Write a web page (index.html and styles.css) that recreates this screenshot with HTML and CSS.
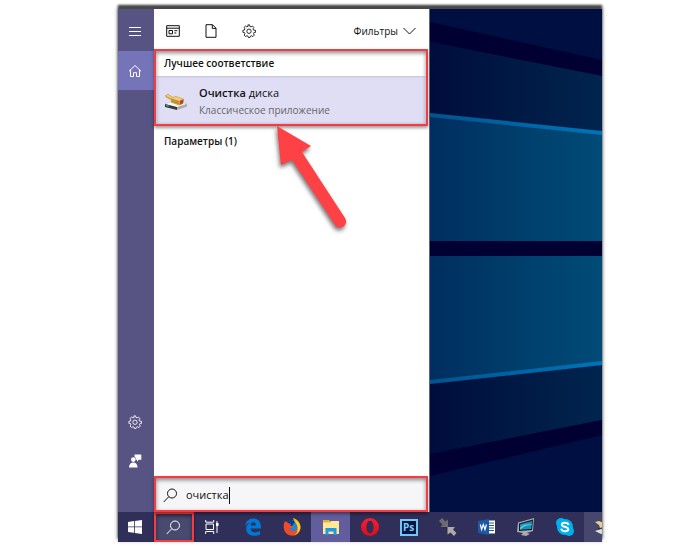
FILE: index.html
```html
<!DOCTYPE html>
<html lang="ru">
<head>
<meta charset="utf-8">
<title>Поиск</title>
<link rel="stylesheet" href="styles.css">
</head>
<body>
<div class="screen">
  <main class="desktop">
    <nav class="rail" aria-label="Меню">
      <button class="rail-item" aria-label="Меню"><svg width="14" height="12" viewBox="0 0 14 12"><path class="line" d="M1 1.5h12M1 5.5h12M1 9.5h12"/></svg></button>
      <button class="rail-item current" aria-label="Домой"><svg width="14" height="14" viewBox="0 0 14 14"><path class="line" d="M1 7.2 7 1.5l6 5.7M2.5 6v6.5h3V8.7h3v3.8h3V6"/></svg></button>
      <div class="rail-space"></div>
      <button class="rail-item" aria-label="Настройки"><svg width="14" height="14" viewBox="0 0 16 16"><use href="#gear"/></svg></button>
      <button class="rail-item" aria-label="Отзывы"><svg width="14" height="14" viewBox="0 0 14 14"><g fill="#fff"><path d="M6.5.5h6.8v5.3h-2.5L9 7.500V5.800H7.800A3 3 0 0 0 6.500 2.500z"/><circle cx="5.3" cy="5.6" r="2.3"/><path d="M1 13.500c0-3 1.500-5 4.300-5s4.200 2 4.200 5z"/></g></svg></button>
    </nav>
    <section class="panel">
      <header class="tools">
        <button class="tool" aria-label="Приложения"><svg width="14" height="12" viewBox="0 0 14 12"><path class="line" d="M.7.7h12.6v10.6H.7zM.7 3.200h12.600M3 5.500h3.500v3.300H3zM8.300 5.700h3M8.300 8h2"/></svg></button>
        <button class="tool" aria-label="Документы"><svg width="12" height="14" viewBox="0 0 12 14"><path class="line" d="M1 .7h6.500L11 4.200v9.100H1zM7.300.7v3.700H11"/></svg></button>
        <button class="tool" aria-label="Параметры"><svg width="14" height="14" viewBox="0 0 16 16"><use href="#gear"/></svg></button>
        <button class="filters">Фильтры <svg width="13" height="8" viewBox="0 0 13 8"><path class="line" d="m.5 1 6 6 6-6"/></svg></button>
      </header>
      <section class="best marked">
        <h2 class="heading">Лучшее соответствие</h2>
        <a class="result" href="#">
          <svg width="24" height="20" viewBox="0 0 24 20">
            <path fill="#fafafa" stroke="#bbb" stroke-width=".5" d="m1 13 10-4 12 4-10 4z"/>
            <path fill="#343d3a" d="m1 13 12 3v3L1 16z"/><path fill="#aaa" d="m13 16 10-3v2.500L13 19z"/>
            <path fill="#36b879" d="m2 14 3 .8v1L2 15z"/>
            <path fill="#d4a145" d="M1 4.500 4 3l5 3 3-1 8 3-1 5-4 1.500-8-3V9L2 6.500z"/>
            <path fill="#f0cc78" d="m2 4.800 2-1 5 3 3-1 7 2.500-4 1.500-7-2z"/>
            <path fill="#a84a31" d="m16 10 3.500-1.700-.5 4-3 1.500z"/><path stroke="#a06d26" stroke-width=".6" d="m7 8 8 3M7 10l8 2.700"/>
          </svg>
          <span class="result-text"><span class="name"><b>Очистка</b> диска</span><span class="kind">Классическое приложение</span></span>
        </a>
      </section>
      <h2 class="heading group">Параметры (1)</h2>
      <div class="panel-space"></div>
      <label class="search marked">
        <svg width="15" height="15" viewBox="0 0 15 15"><use href="#lens"/></svg>
        <input type="text" value="очистка" aria-label="Поиск">
        <span class="caret"></span>
      </label>
      <svg class="arrow" width="80" height="112" viewBox="0 0 80 112" aria-hidden="true"><path d="M7 3 41 23 32 29 75 95A6 6 0 0 1 65 102L22 37 11 42z"/></svg>
    </section>
    <svg class="wallpaper" viewBox="0 0 172 503" preserveAspectRatio="none" aria-hidden="true">
      <defs>
        <linearGradient id="glass"><stop stop-color="#002e61"/><stop offset=".5" stop-color="#003e6c"/><stop offset="1" stop-color="#004b77"/></linearGradient>
        <linearGradient id="dim"><stop stop-color="#000d3c"/><stop offset="1" stop-color="#00254e"/></linearGradient>
        <linearGradient id="edge"><stop stop-color="#00548f"/><stop offset="1" stop-color="#0074b9"/></linearGradient>
      </defs>
      <path fill="#000f42" d="M0 0h172v503H0z"/>
      <path fill="#000033" d="m0 13 172 38v16L0 33z"/>
      <path fill="url(#dim)" d="m0 33 172 34v56L0 104z"/>
      <path fill="url(#glass)" d="m0 106 172 18v108H0zM0 247h172v107L0 373z"/>
      <path fill="#000033" d="M0 232h172v15H0z"/>
      <path fill="url(#dim)" d="m0 373 172-19v57L0 445z"/>
      <path fill="url(#edge)" d="m0 104 172 18v4L0 108zM0 371l172-19v4L0 375z"/>
      <path fill="#000033" d="m0 445 172-34v15L0 467z"/>
    </svg>
  </main>
  <footer class="taskbar">
    <button class="task start" aria-label="Пуск"><svg width="14" height="14" viewBox="0 0 14 14"><path fill="#fff" d="m0 2 6-.9v5.400H0zM6.800 1 14 0v6.500H6.800zM0 7.300h6v5.400L0 12zM6.800 7.300H14V14l-7.200-1z"/></svg></button>
    <button class="task find marked" aria-label="Поиск"><svg width="15" height="15" viewBox="0 0 15 15"><use href="#lens"/></svg></button>
    <button class="task view" aria-label="Представление задач"><svg width="14" height="14" viewBox="0 0 14 14"><path class="line" d="M.7 0v2.200h8V0M1 4h7.500v5.500H1zM.7 14v-2.500h8V14M12 1v12"/><path fill="#fff" d="M11 3h2.500v3H11z"/></svg></button>
    <button class="task" aria-label="Edge"><svg width="16" height="18" viewBox="0 0 16 18"><path fill="#0078d7" d="M0 8.200C.7 3.300 3.800.5 8 .5c5 0 8 3.500 8 8.300v1.700H5.500c.2 2.700 2 3.900 4.700 3.900 1.800 0 3.400-.5 4.800-1.300v3.400c-1.500.9-3.600 1.300-5.800 1.300-5 0-8-3-8-7 0-2.800 1.300-5 3.800-6.300C2.700 4.900 1 6.300 0 8.200zm5.600-.7h5.300c0-2-.9-3.300-2.600-3.300S5.700 5.600 5.600 7.500z"/></svg></button>
    <button class="task" aria-label="Firefox"><svg width="18" height="18" viewBox="0 0 18 18"><circle cx="9" cy="9" r="7" fill="#1a87da"/><path fill="#063d91" d="M4 4c3-3 7-2 8 0L9 8 5 7z"/><path fill="#f34926" d="M2 3c-2 4-2 10 2 13 5 3.500 11 1 13-4 1-4 0-7-2-9 1 6-1 10-5 10-3 0-4-2-4-3 2 1 4 0 5-1L7 8l1-2-3-1z"/><path fill="#ffb514" d="M10 0c4 1 8 5 7.500 10-.5 4-3.500 7-7 7.500 4-2 5-5 4-9-.8-3-3-4-4.500-8.500z"/><path fill="#ffde39" d="M13 3c4 3 5 8 1 12 1.500-4 1-8-1-12z"/></svg></button>
    <button class="task open" aria-label="Проводник"><svg width="18" height="16" viewBox="0 0 18 16"><path fill="#e8bd32" d="M1 1h6l1.500 2H17v12H1z"/><path fill="#ffe999" d="M1 3.500h7l1-1.500h8v13H1z"/><path fill="#ed9b20" d="M2 1.500h4v1H2z"/><path fill="#1d9be0" d="M3.500 9h11v7h-3v-3.500h-5V16h-3z"/></svg></button>
    <button class="task" aria-label="Opera"><svg width="18" height="18" viewBox="0 0 18 18"><defs><linearGradient id="red" x2="0" y2="1"><stop stop-color="#ff1b2d"/><stop offset="1" stop-color="#d80f1d"/></linearGradient></defs><path fill="url(#red)" fill-rule="evenodd" d="M9 0a9 9 0 1 0 0 18A9 9 0 0 0 9 0zm0 2.800c2.300 0 3.600 2.800 3.600 6.200S11.300 15.200 9 15.200 5.400 12.400 5.400 9 6.700 2.800 9 2.800z"/></svg></button>
    <button class="task" aria-label="Photoshop"><span class="ps">Ps</span></button>
    <button class="task" aria-label="Передача"><svg width="18" height="18" viewBox="0 0 18 18"><path fill="#6d6b70" d="m0 3 3-3 3.500 3.500L9 1.500V9H1.500l2-2.500z"/><path fill="#adaaa9" d="M8.500 9H16l-2 2.500 3.500 3.500-2.500 3-3.500-3.500-3 2z"/></svg></button>
    <button class="task" aria-label="Word"><svg width="18" height="16" viewBox="0 0 18 16"><path fill="#fff" d="M9 1.500h8v13H9z"/><path stroke="#2b579a" d="M11 4h5M11 6.500h5M11 9h5M11 11.500h5"/><path fill="#1c5aa5" d="m0 2 11-2v16L0 14z"/><path fill="none" stroke="#fff" stroke-width="1.200" d="m2.300 5.500 1.300 5 1.700-5 1.700 5 1.400-5"/></svg></button>
    <button class="task" aria-label="Монитор"><svg width="18" height="18" viewBox="0 0 18 18"><path fill="#a9abac" d="M1 4.500 17 0l-1 13-6 2 3 1-4 2-5-1 2-2-6-1z"/><path fill="#12181e" d="m2 5.500 14-4-1 10.500-13 1z"/><path fill="#1991bd" d="m3 6.300 12-3.300-.8 8L3 11.800z"/><path fill="#5cccdf" d="M3 10c4-5 7-3 11.600-4v1C10 7 7 8 3 11.800z"/></svg></button>
    <button class="task" aria-label="Skype"><svg width="18" height="18" viewBox="0 0 18 18"><g fill="#00aff0"><circle cx="9" cy="9" r="8"/><circle cx="5" cy="5" r="5"/><circle cx="13" cy="13" r="5"/></g><path fill="none" stroke="#fff" stroke-width="2" stroke-linecap="round" d="M12.300 6.200C11.500 4.500 6 4 5.800 6.700 5.700 9.300 12.400 8 12.300 11.300 12.200 14 6.500 14 5.500 11.500"/></svg></button>
    <button class="task next" aria-label="Ещё"><svg width="18" height="18" viewBox="0 0 18 18"><path fill="#e8cf8f" d="m0 4 4-1 5 2-1 4-3 1-1-3z"/><path fill="#222" d="m3 10 6 1v2H4z"/><path fill="#ddd" d="m0 13 6-2 10 2-10 3z"/></svg></button>
  </footer>
</div>
<svg class="symbols" aria-hidden="true">
  <symbol id="gear" viewBox="0 0 16 16"><path class="line" d="m6.700 1 .3 1.700L5.500 3.300 4.200 2.200 2.300 4l1 1.500L2.700 7 1 7.200v2.300l1.800.3.600 1.400-1 1.500 1.700 1.700 1.500-1 1.400.6.300 1.500h1.800l.4-1.500 1.500-.6 1.500 1 1.600-1.700-1-1.500.6-1.500 1.800-.2V7.200L13.200 7l-.6-1.500 1-1.500-1.700-1.700-1.500 1L9 2.700 8.700 1z"/><circle class="line" cx="8" cy="8.300" r="2.500"/></symbol>
  <symbol id="lens" viewBox="0 0 15 15"><circle class="line" cx="9" cy="5.500" r="4.500"/><path class="line" d="M5.700 8.800.7 14"/></symbol>
</svg>
</body>
</html>
```

FILE: styles.css
```css
* { box-sizing: border-box; }
body { margin: 0; background: #fff; font-family: "Open Sans", "Noto Sans", sans-serif; font-size: 10px; color: #111; }
button { border: 0; padding: 0; background: none; color: inherit; font: inherit; }
svg { display: block; flex: none; }
.line { fill: none; stroke: currentColor; stroke-width: 1; }
.symbols { position: absolute; width: 0; height: 0; }
.screen { display: flex; flex-direction: column; min-height: calc(100vh - 17px); margin: 9px 98px 8px 118px; box-shadow: 0 -4px 2px #484848, 0 -2px 4px #666; }
.desktop { display: flex; flex: 1; background: #000f42; }
.rail { display: flex; flex-direction: column; width: 36px; padding: 3px 2px 32px 0; background: #575382; color: #fff; }
.rail-item { display: grid; place-items: center; height: 39px; }
.rail-item.current { margin-right: -2px; padding-right: 2px; background: #7674b8; }
.rail-space { flex: 1; }
.panel { position: relative; display: flex; flex-direction: column; width: 276px; padding-right: 1px; background: #fff; border-right: 1px solid #5e6684; }
.tools { display: flex; align-items: center; gap: 24px; height: 40px; padding: 4px 12px 0; }
.tool { display: grid; place-items: center; width: 14px; height: 20px; }
.filters { display: flex; align-items: center; gap: 5px; margin-left: auto; }
.marked { border: 2px solid #f83b40; box-shadow: 0 2px 3px #0006, inset 0 2px 4px #0007; }
.best { position: relative; height: 77px; }
.heading { margin: 0; padding: 0 8px; font-size: 10px; line-height: 25px; font-weight: 600; }
.group { padding-left: 10px; line-height: 30px; }
.result { display: flex; align-items: center; gap: 11px; height: 48px; padding: 2px 8px 0; background: #dfdef5; box-shadow: inset 2px 0 3px #0002, inset -2px 0 3px #0002; color: #111; text-decoration: none; }
.result-text { display: flex; flex-direction: column; }
.name { font-size: 11px; line-height: 18px; }
.name b { font-weight: 600; }
.kind { line-height: 16px; color: #666; }
.panel-space { flex: 1; }
.search { display: flex; align-items: center; height: 36px; gap: 8px; padding: 2px 7px 0; background: #f6f6f9; }
.search input { field-sizing: content; border: 0; padding: 0; outline: 0; background: none; color: #111; font: inherit; font-size: 11px; line-height: 20px; }
.caret { width: 1px; height: 17px; margin-left: -8px; background: #111; }
.arrow { position: absolute; left: 116px; top: 114px; overflow: visible; fill: #fd4144; filter: drop-shadow(-1px 3px 2px #0008); }
.wallpaper { flex: 1; width: 0; min-width: 0; height: auto; }
.taskbar { display: flex; height: 30px; overflow: hidden; background: #302f59; color: #fff; }
.task { display: grid; place-items: center; flex: none; width: 39px; }
.start { width: 36px; padding-right: 2px; }
.find { width: 40px; padding-right: 2px; background: #484a70; }
.view { padding-right: 4px; }
.open { background: #625e9d; }
.next { background: #47466d; justify-items: start; padding-left: 11px; }
.ps { width: 18px; height: 17px; border: 2px solid #73c6ef; background: #071446; color: #79cdf5; font-size: 10px; line-height: 12px; font-weight: 700; }
```
